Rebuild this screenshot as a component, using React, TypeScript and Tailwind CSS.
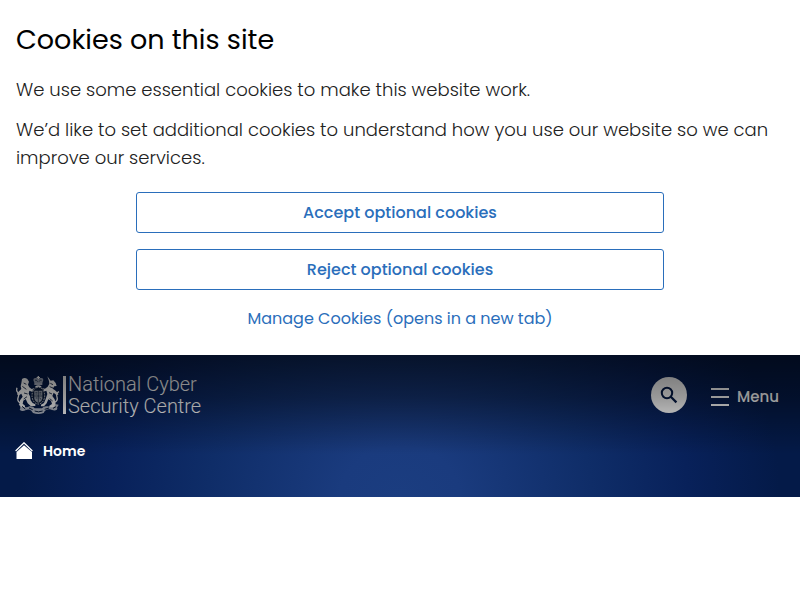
import React from 'react';

function Crest() {
  return (
    <svg viewBox="0 0 132 114" className="h-[38px] w-[44px] shrink-0" fill="#fff" aria-hidden="true">
      <path d="M52 12 L55 21 L79 21 L82 12 Q82 5 75 6 Q70 5 67 9 Q64 5 59 6 Q52 5 52 12Z" opacity=".6" />
      <path d="M65 0h4v3h3v3h-3v3h-4v-3h-3v-3h3z" />
      <path d="M55 22h24v4h-24z" />
      <path d="M57 13q4-3 8 4M77 13q-4-3-8 4" stroke="#071838" strokeWidth="2" fill="none" />
      <path d="M18 9q8-6 16 0l5 8-3 9 4 8 7 5 7-2 2 5-8 5-8-3-2 9 4 8 2 12 6 8 8 4v5H44l-9-8-6-13-7 5-2 9 7 6v5H17l-7-8 2-13 8-11-4-9-9 6-4-5 6-8 7-7-2-8 2-9z" />
      <path d="M17 83Q1 78 7 62Q10 54 5 49Q0 44 3 35" stroke="#fff" strokeWidth="4" fill="none" />
      <path d="M23 21l8 4M19 31l12 9M24 51l11 3M23 69l10-7" stroke="#071838" strokeWidth="2.5" fill="none" />
      <path d="M94 1l10 13 8-1 7 8 3 9-7 1-5 7 7 5 9 8 1 5-6 1-8-7-4 10 7 10 3 15-6 9H100v-5l8-5-3-10-8-4-5 12-8 9H75v-5l9-5 5-12 5-15-3-10-8 3-7-6 3-4 8 1 8-6 5-9-1-8z" />
      <path d="M113 80q14-5 10-17t6-16" stroke="#fff" strokeWidth="4" fill="none" />
      <path d="M103 22l8 4M101 32l10 4M99 50l9 4M101 68l9 7" stroke="#071838" strokeWidth="2.5" fill="none" />
      <ellipse cx="67" cy="59" rx="21" ry="27" fill="#071838" />
      <ellipse cx="67" cy="59" rx="19" ry="25" fill="none" stroke="#fff" strokeWidth="3" strokeDasharray="5 3" opacity=".8" />
      <path d="M55 44h24v23q-1 9-12 14-11-5-12-14z" opacity=".62" />
      <path d="M67 43v37M55 60h24M58 49h6M70 49h6M58 54h6M70 54h6M59 66h5M71 65l4 6" stroke="#071838" strokeWidth="2" />
      <path d="M58 31q9-7 18 0v4q-9-5-18 0z" />
      <path d="M8 85q9-5 15 4t17 2q12-2 16 6h22q5-8 17-6 11 3 17-3t16-2l-5 9q3 6-4 8-10 1-17-3-11-2-16 6l-3 5q-16 6-32 0l-5-7q-8-6-16-2-12 6-19-1 5-7-3-16z" opacity=".7" />
      <path d="M18 91l10 8M39 96l11 5M56 105q11 5 24 0M86 100l13-4M111 97l9-5" stroke="#071838" strokeWidth="3" fill="none" />
    </svg>
  );
}

function HomeIcon() {
  return (
    <svg viewBox="0 0 18 18" className="size-[18px]" aria-hidden="true">
      <path d="M.6 9L9 .8 17.4 9" fill="none" stroke="#fff" strokeWidth="1.3" />
      <path d="M9 3.2L17 10v7H1.500v-7z" fill="#fff" />
    </svg>
  );
}

const cookieButton =
  'h-[41px] w-full rounded-[3px] border border-[#2a6ebb] bg-white text-base font-medium text-[#2a6ebb]';

export default function App() {
  return (
    <div className="bg-white font-['Poppins','Inter',sans-serif]">
      <section aria-labelledby="cookie-title" className="px-4 pt-5 pb-[23px]">
        <h2 id="cookie-title" className="text-[27px] leading-10 font-normal text-black">
          Cookies on this site
        </h2>
        <div className="mt-4 space-y-3 text-lg leading-7 font-light text-[#212121]">
          <p>We use some essential cookies to make this website work.</p>
          <p>
            We’d like to set additional cookies to understand how you use our website so we can
            improve our services.
          </p>
        </div>
        <div className="mx-auto mt-5 flex max-w-[528px] flex-col items-center gap-4">
          <button type="button" className={cookieButton}>Accept optional cookies</button>
          <button type="button" className={cookieButton}>Reject optional cookies</button>
          <a href="#cookies" className="text-base leading-[26px] text-[#2a6ebb]">
            Manage Cookies (opens in a new tab)
          </a>
        </div>
      </section>

      <header className="relative bg-[#041a48] bg-[radial-gradient(ellipse_50%_240%_at_50%_100%,#1b3d80_0%,#1a3b7e_15%,#0f2d68_48%,#08215a_72%,#041a48_95%)] text-white">
        <div className="flex items-center justify-between px-4 pt-[18px]">
          <a href="#home" aria-label="National Cyber Security Centre" className="flex items-center">
            <Crest />
            <span className="ml-[3px] h-[38px] w-[3px] bg-white" />
            <span className="ml-[2px] font-['Roboto',sans-serif] text-xl leading-[22px] font-light">
              National Cyber
              <br />
              Security Centre
            </span>
          </a>
          <div className="flex items-center gap-6 pr-[5px]">
            <button
              type="button"
              aria-label="Search"
              className="grid size-9 place-items-center rounded-full bg-white text-[#041a48]"
            >
              <svg viewBox="0 0 18 18" className="size-[18px]" fill="none" stroke="currentColor" strokeWidth="2" aria-hidden="true">
                <circle cx="7" cy="7" r="5.2" />
                <path d="M10.8 10.8l5.6 5.6" strokeWidth="2.2" />
              </svg>
            </button>
            <button type="button" className="flex items-center gap-2 pt-1 text-[15px] font-medium">
              <span className="flex w-[18px] flex-col gap-[6px]">
                <span className="h-[2px] bg-white" />
                <span className="h-[2px] bg-white" />
                <span className="h-[2px] bg-white" />
              </span>
              Menu
            </button>
          </div>
        </div>
        <nav aria-label="Breadcrumb" className="relative z-10 px-[15px] pt-[22px] pb-[34px]">
          <a href="#home" className="flex items-center gap-[10px] text-sm leading-6 font-semibold">
            <HomeIcon />
            Home
          </a>
        </nav>
        <div className="pointer-events-none absolute inset-0 bg-linear-to-b from-black/60 via-black/40 via-30% to-transparent to-70%" />
      </header>
    </div>
  );
}
